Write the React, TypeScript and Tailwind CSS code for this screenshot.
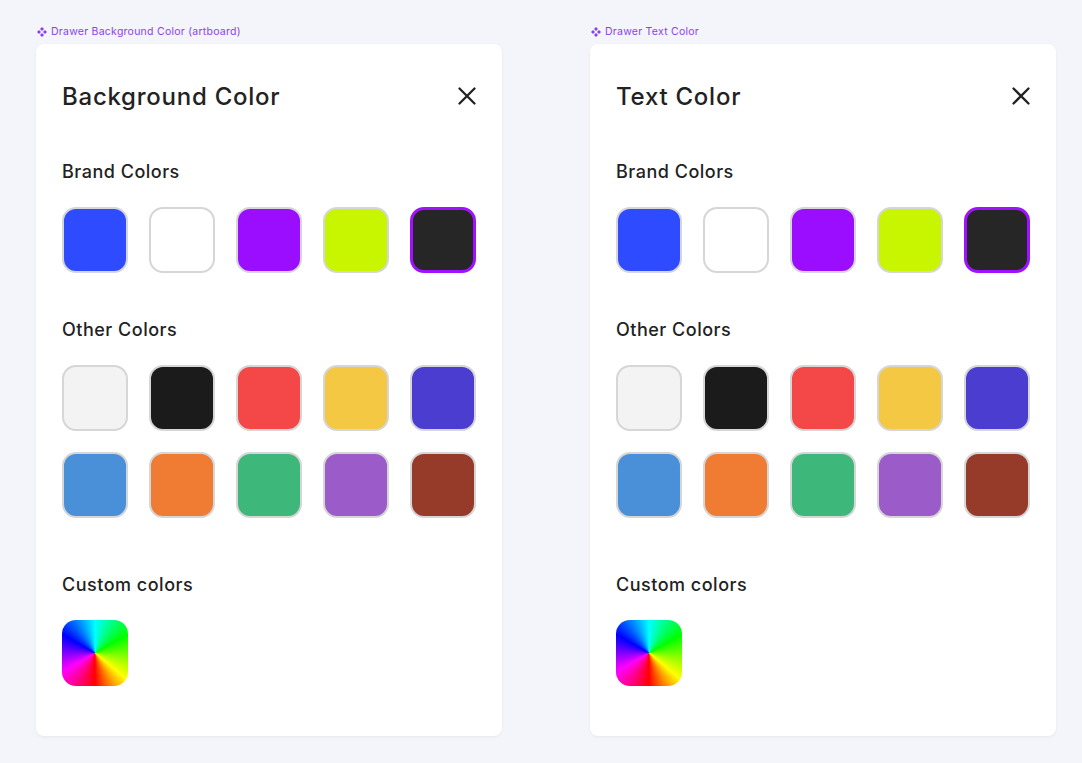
import React from "react";

type Swatch = { color: string; selected?: boolean };

const brand: Swatch[] = [
  { color: "bg-[#2f4bff]" },
  { color: "bg-white" },
  { color: "bg-[#9b0dff]" },
  { color: "bg-[#c8f500]" },
  { color: "bg-[#262626]", selected: true },
];

const others: Swatch[] = [
  { color: "bg-[#f3f3f3]" },
  { color: "bg-[#1b1b1b]" },
  { color: "bg-[#f44848]" },
  { color: "bg-[#f4c842]" },
  { color: "bg-[#4a3dd0]" },
  { color: "bg-[#4a90d9]" },
  { color: "bg-[#f07b33]" },
  { color: "bg-[#3db87a]" },
  { color: "bg-[#9b5bc8]" },
  { color: "bg-[#963a2a]" },
];

function Chip({ s }: { s: Swatch }) {
  return (
    <div
      className={`h-[66px] w-[66px] rounded-[14px] ${s.color} ${
        s.selected ? "border-[3px] border-[#a012ff]" : "border-2 border-[#d6d6d6]"
      }`}
    />
  );
}

function Heading({ children }: { children: React.ReactNode }) {
  return (
    <h3 className="text-[18px] leading-[30px] font-medium tracking-[0.5px] text-[#222]">
      {children}
    </h3>
  );
}

function Section({ title, items }: { title: string; items: Swatch[] }) {
  return (
    <div className="flex flex-col gap-[20px]">
      <Heading>{title}</Heading>
      <div className="grid grid-cols-5 gap-[21px]">
        {items.map((s, i) => (
          <Chip key={i} s={s} />
        ))}
      </div>
    </div>
  );
}

function Drawer({ label, title }: { label: string; title: string }) {
  return (
    <div className="flex flex-col">
      <div className="flex h-[14px] items-center gap-[4px] pl-[1px] text-[10.5px] tracking-[0.25px] text-[#8c3ff0]">
        <svg width="10" height="10" viewBox="0 0 10 10" className="fill-[#8c3ff0]">
          <path d="M5 0 L7 2 L5 4 L3 2 Z" />
          <path d="M5 6 L7 8 L5 10 L3 8 Z" />
          <path d="M0 5 L2 3 L4 5 L2 7 Z" />
          <path d="M6 5 L8 3 L10 5 L8 7 Z" />
        </svg>
        <span>{label}</span>
      </div>
      <div className="mt-[5px] flex h-[692px] w-[466px] flex-col rounded-[8px] bg-white px-[26px] pt-[37px] shadow-[0_1px_3px_rgba(20,20,60,0.06)]">
        <div className="flex items-center justify-between">
          <h2 className="text-[24px] leading-[32px] font-medium tracking-[0.75px] text-[#222]">
            {title}
          </h2>
          <svg width="18" height="18" viewBox="0 0 18 18" className="-mt-[2px]">
            <path
              d="M1.5 1.5 L16.5 16.5 M16.5 1.5 L1.5 16.5"
              stroke="#222"
              strokeWidth="2.3"
              strokeLinecap="round"
            />
          </svg>
        </div>
        <div className="mt-[44px]">
          <Section title="Brand Colors" items={brand} />
        </div>
        <div className="mt-[42px]">
          <Section title="Other Colors" items={others} />
        </div>
        <div className="mt-[52px] flex flex-col gap-[20px]">
          <Heading>Custom colors</Heading>
          <div className="h-[66px] w-[66px] rounded-[14px] bg-[conic-gradient(from_0deg,#00ffff,#00ff00_60deg,#ffff00_130deg,#ff0000_180deg,#ff00ff_240deg,#0000ff_300deg,#00ffff_360deg)]" />
        </div>
      </div>
    </div>
  );
}

export default function App() {
  return (
    <div
      className="flex min-h-[763px] w-full gap-[88px] bg-[#f4f5fa] pl-[36px] pt-[25px]"
      style={{ fontFamily: "Inter, 'Noto Sans', sans-serif" }}
    >
      <Drawer label="Drawer Background Color (artboard)" title="Background Color" />
      <Drawer label="Drawer Text Color" title="Text Color" />
    </div>
  );
}
